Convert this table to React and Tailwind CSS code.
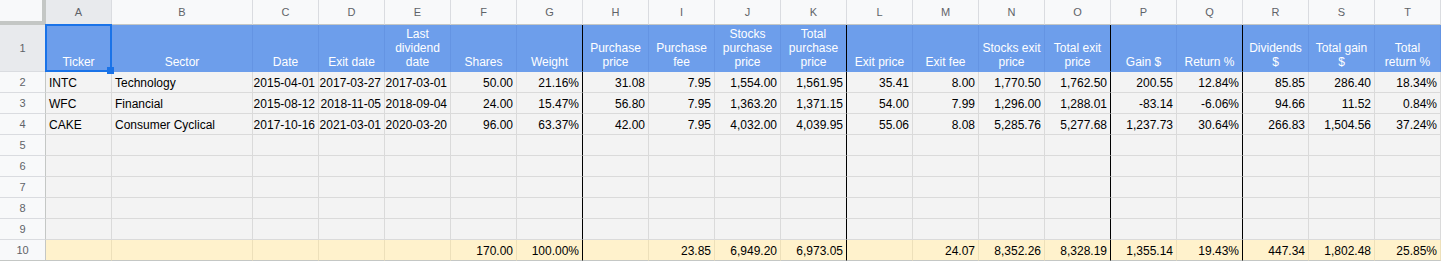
import React from "react";

const letters = "ABCDEFGHIJKLMNOPQRST".split("");

const headers = [
  "Ticker",
  "Sector",
  "Date",
  "Exit date",
  "Last dividend date",
  "Shares",
  "Weight",
  "Purchase price",
  "Purchase fee",
  "Stocks purchase price",
  "Total purchase price",
  "Exit price",
  "Exit fee",
  "Stocks exit price",
  "Total exit price",
  "Gain $",
  "Return %",
  "Dividends $",
  "Total gain $",
  "Total return %",
];

const rows = [
  ["INTC", "Technology", "2015-04-01", "2017-03-27", "2017-03-01", "50.00", "21.16%", "31.08", "7.95", "1,554.00", "1,561.95", "35.41", "8.00", "1,770.50", "1,762.50", "200.55", "12.84%", "85.85", "286.40", "18.34%"],
  ["WFC", "Financial", "2015-08-12", "2018-11-05", "2018-09-04", "24.00", "15.47%", "56.80", "7.95", "1,363.20", "1,371.15", "54.00", "7.99", "1,296.00", "1,288.01", "-83.14", "-6.06%", "94.66", "11.52", "0.84%"],
  ["CAKE", "Consumer Cyclical", "2017-10-16", "2021-03-01", "2020-03-20", "96.00", "63.37%", "42.00", "7.95", "4,032.00", "4,039.95", "55.06", "8.08", "5,285.76", "5,277.68", "1,237.73", "30.64%", "266.83", "1,504.56", "37.24%"],
  Array(20).fill(""),
  Array(20).fill(""),
  Array(20).fill(""),
  Array(20).fill(""),
  Array(20).fill(""),
];

const totals = ["", "", "", "", "", "170.00", "100.00%", "", "23.85", "6,949.20", "6,973.05", "", "24.07", "8,352.26", "8,328.19", "1,355.14", "19.43%", "447.34", "1,802.48", "25.85%"];

// columns with a black right border: G(6), K(10), O(14), Q(16)
const blackRight = new Set([6, 10, 14, 16]);

function rightBorder(ci, normal) {
  return blackRight.has(ci) ? "border-r-black" : normal;
}

export default function App() {
  return (
    <div
      className="relative w-[1441px] h-[261px] overflow-hidden bg-white text-[12px] leading-[14px]"
      style={{ fontFamily: '"Liberation Sans", Arial, sans-serif' }}
    >
      <div className="grid grid-cols-[46px_66px_141px_repeat(18,66px)] grid-rows-[25px_47px_repeat(9,21px)]">
        {/* corner */}
        <div className="bg-[#f8f9fa] border-r-4 border-b-4 border-[#c4c7c5]" />
        {/* column letters */}
        {letters.map((l, i) => (
          <div
            key={l}
            className={`flex items-center justify-center border-r border-b border-r-[#dadce0] border-b-[#c4c7c5] text-[11px] text-[#5f6368] ${
              i === 0 ? "bg-[#e8eaed]" : "bg-[#f8f9fa]"
            }`}
          >
            {l}
          </div>
        ))}

        {/* row 1 header */}
        <div className="flex items-center justify-center bg-[#e8eaed] border-r border-b border-r-[#c4c7c5] border-b-[#dadce0] text-[11px] text-[#5f6368]">
          1
        </div>
        {headers.map((h, ci) => (
          <div
            key={h}
            className={`flex items-end justify-center text-center px-[3px] pb-[2px] bg-[#6d9eeb] text-white border-r border-b border-b-[#6d9eeb] ${rightBorder(
              ci,
              "border-r-[#6494e3]"
            )}`}
          >
            {h}
          </div>
        ))}

        {/* data rows */}
        {rows.map((r, ri) => (
          <React.Fragment key={ri}>
            <div className="flex items-center justify-center bg-[#f8f9fa] border-r border-b border-r-[#c4c7c5] border-b-[#dadce0] text-[11px] text-[#5f6368]">
              {ri + 2}
            </div>
            {r.map((v, ci) => (
              <div
                key={ci}
                className={`flex items-end whitespace-nowrap px-[3px] pb-[2px] bg-[#f3f3f3] text-black border-r border-b border-b-[#dadada] ${rightBorder(
                  ci,
                  "border-r-[#dadada]"
                )} ${ci < 2 ? "justify-start" : "justify-end"}`}
              >
                {v}
              </div>
            ))}
          </React.Fragment>
        ))}

        {/* totals row */}
        <div className="flex items-center justify-center bg-[#f8f9fa] border-r border-b border-r-[#c4c7c5] border-b-[#c4c7c5] text-[11px] text-[#5f6368]">
          10
        </div>
        {totals.map((v, ci) => (
          <div
            key={ci}
            className={`flex items-end justify-end whitespace-nowrap px-[3px] pb-[2px] bg-[#fff2cc] text-black border-r border-b border-b-[#c4c7c5] ${rightBorder(
              ci,
              "border-r-[#ede0ba]"
            )}`}
          >
            {v}
          </div>
        ))}
      </div>

      {/* selection on A1 */}
      <div className="absolute left-[45px] top-[24px] w-[67px] h-[48px] border-2 border-[#1a73e8] pointer-events-none" />
      <div className="absolute left-[107px] top-[67px] w-[7px] h-[7px] bg-[#1a73e8] pointer-events-none" />
    </div>
  );
}
